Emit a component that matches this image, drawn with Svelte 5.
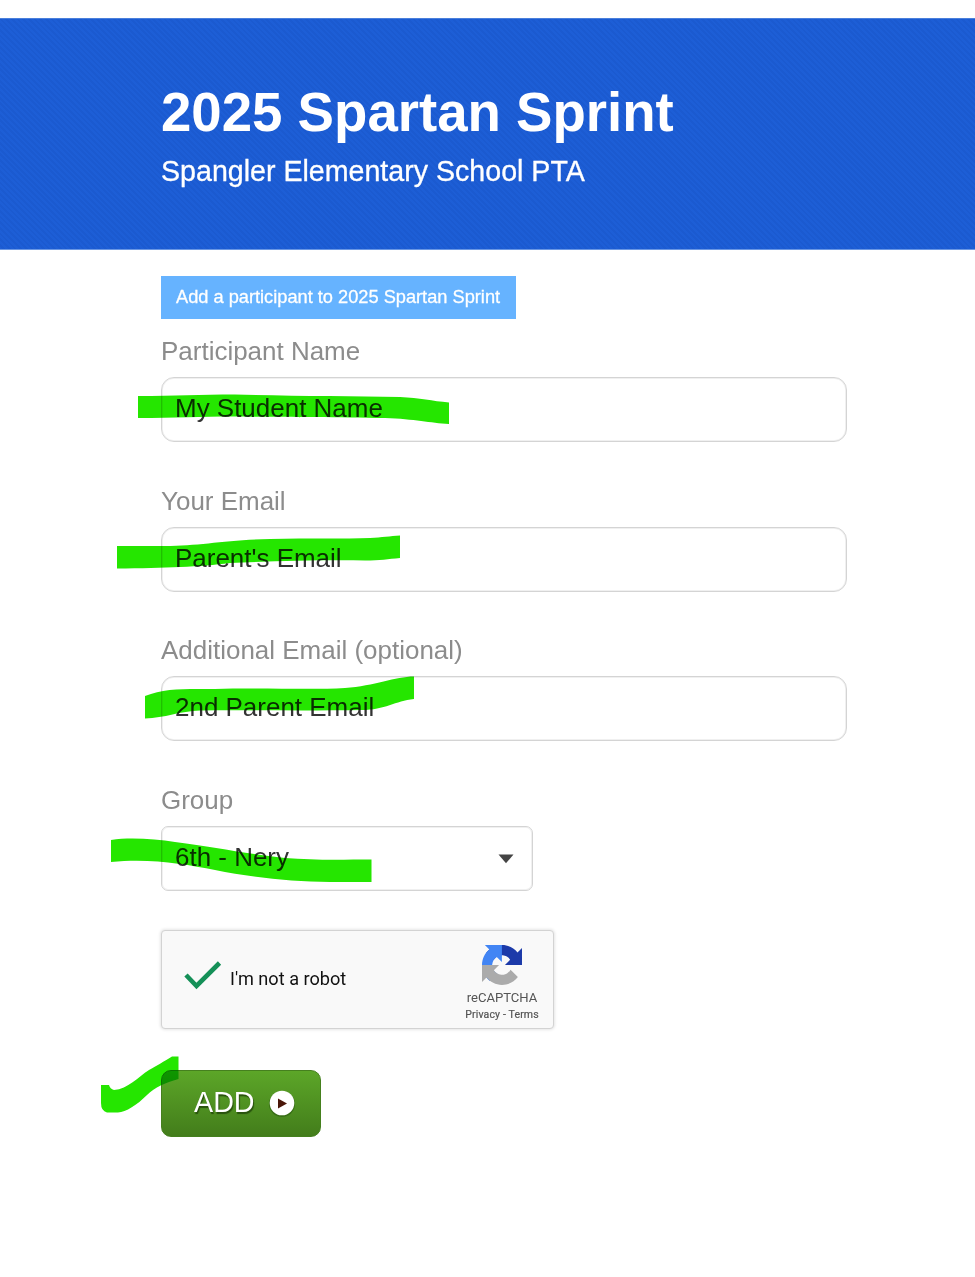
<script>
  let fields = $state([
    { id: "name", label: "Participant Name", value: "My Student Name" },
    { id: "email", label: "Your Email", value: "Parent's Email" },
    { id: "email2", label: "Additional Email (optional)", value: "2nd Parent Email" },
  ]);

  let group = $state("6th - Nery");

  // highlighter strokes, drawn over the form
  const strokes = [
    "M138 396 C175 396 200 394.500 235 394.500 C290 396 350 396 400 397 C420 398 432 401 449 402.500 V424 C430 423 415 419 385 418 C330 417 270 417 235 416.500 C200 416.500 175 418 138 418 Z",
    "M117 546 H165 C200 546 225 540 270 539 C310 538 345 539 370 538 C382 537.500 390 536 400 535.500 V558 C388 559 380 560.500 365 560.500 C320 560 270 561 230 563 C200 567 165 568 117 568.500 Z",
    "M145 696 C165 688 185 689 215 689 C260 687.500 310 690 345 688 C375 686 395 676.500 414 676.500 V699 C395 701 385 710 362 710 C310 711 250 710 200 710.500 C180 711 165 718 145 718.500 Z",
    "M111 840 C130 837 155 839 175 842 C215 847 240 853 285 858 C315 860.500 345 859.500 371.500 859.500 V882 H330 C290 882 250 877 215 870 C185 864 150 858 111 862 Z",
    "M101 1085 H109 Q110 1089 114 1090 C128 1089 138 1077 149 1070 C158 1065 163 1062 172 1056.500 H178.500 V1079 C165 1083 155 1087 147 1095 C137 1105 126 1112 118 1112.500 H107 Q101 1111 101 1103 Z",
  ];
</script>

<div class="page">
  <header>
    <h1>2025 Spartan Sprint</h1>
    <h2>Spangler Elementary School PTA</h2>
  </header>

  <main>
    <div class="badge">Add a participant to 2025 Spartan Sprint</div>

    {#each fields as field}
      <div class="field">
        <label for={field.id}>{field.label}</label>
        <input id={field.id} type="text" bind:value={field.value} />
      </div>
    {/each}

    <div class="field">
      <label for="group">Group</label>
      <button id="group" class="select" type="button">
        <span>{group}</span>
        <svg width="16" height="10" viewBox="0 0 16 10"><path d="M0.500 0.500H15.500L8 9.300Z" fill="#444" /></svg>
      </button>
    </div>

    <div class="captcha">
      <svg class="check" width="38" height="30" viewBox="0 0 38 30">
        <path d="M2 14L12.500 25L35.500 2" fill="none" stroke="#159058" stroke-width="4.600" />
      </svg>
      <span class="robot">I'm not a robot</span>
      <div class="brand">
        <svg width="40" height="40" viewBox="0 0 64 64">
          <path fill="#1c3aa9" d="M64 31.955l-.033-1.37V4.687l-7.16 7.16C50.948 4.674 42.033.093 32.05.093c-10.4 0-19.622 4.96-25.458 12.64l11.736 11.86a15.55 15.55 0 0 1 4.754-5.334c2.05-1.6 4.952-2.906 8.968-2.906.485 0 .86.057 1.135.163 4.976.393 9.288 3.14 11.828 7.124l-8.307 8.307L64 31.953" />
          <path fill="#4285f4" d="M31.862.094l-1.37.033H4.594l7.16 7.16C4.58 13.147 0 22.06 0 32.046c0 10.4 4.96 19.622 12.64 25.458L24.5 45.768a15.55 15.55 0 0 1-5.334-4.754c-1.6-2.05-2.906-4.952-2.906-8.968 0-.485.057-.86.163-1.135.393-4.976 3.14-9.288 7.124-11.828l8.307 8.307L31.86.095" />
          <path fill="#ababab" d="M.001 32.045l.033 1.37v25.898l7.16-7.16c5.86 7.173 14.774 11.754 24.76 11.754 10.4 0 19.622-4.96 25.458-12.64l-11.736-11.86a15.55 15.55 0 0 1-4.754 5.334c-2.05 1.6-4.952 2.906-8.968 2.906-.485 0-.86-.057-1.135-.163-4.976-.393-9.288-3.14-11.828-7.124l8.307-8.307c-10.522.04-22.4.066-27.8-.005" />
        </svg>
        <span class="brand-name">reCAPTCHA</span>
        <span class="terms">Privacy - Terms</span>
      </div>
    </div>

    <button class="add" type="button">
      <span>ADD</span>
      <svg width="30" height="30" viewBox="0 0 30 30">
        <circle cx="15" cy="16" r="13" fill="#2c5c10" opacity="0.6" />
        <circle cx="15" cy="15" r="12.300" fill="#fff" />
        <path d="M11 10.500L20 15.500L11 20.500Z" fill="#4a1608" />
      </svg>
    </button>
  </main>

  <svg class="marker" width="975" height="1277" viewBox="0 0 975 1277">
    {#each strokes as d}
      <path {d} />
    {/each}
  </svg>
</div>

<style>
  :global(body) {
    margin: 0;
    background: #fff;
  }

  .page {
    position: relative;
    box-sizing: border-box;
    width: 975px;
    height: 1277px;
    padding-top: 18px;
    overflow: hidden;
    background: #fff;
    font-family: "Liberation Sans", Arial, sans-serif;
  }

  header {
    box-sizing: border-box;
    height: 232px;
    padding: 63px 0 0 161px;
    border-top: 1px solid #4a7fdc;
    border-bottom: 1px solid #6a97e4;
    color: #fff;
    background: repeating-linear-gradient(45deg, #1d5ed6 0 2px, #1b5ad0 2px 4px);
  }

  h1 {
    margin: 0;
    font-size: 54.600px;
    line-height: 62px;
    white-space: nowrap;
  }

  h2 {
    margin: 10px 0 0;
    font-size: 28.600px;
    font-weight: 400;
    line-height: 34px;
    white-space: nowrap;
    -webkit-text-stroke: 0.3px #fff;
  }

  main {
    display: flex;
    flex-direction: column;
    align-items: flex-start;
    padding: 26px 128px 0 161px;
  }

  .badge {
    box-sizing: border-box;
    width: 355px;
    height: 43px;
    margin-bottom: 15px;
    padding-left: 15px;
    color: #fff;
    background: #66b3ff;
    font-size: 18.230px;
    line-height: 42px;
    white-space: nowrap;
    -webkit-text-stroke: 0.3px #fff;
  }

  .field {
    display: flex;
    flex-direction: column;
    width: 100%;
    height: 149.600px;
  }

  label {
    margin-bottom: 9px;
    color: #8c8c8c;
    font-size: 25.970px;
    line-height: 34px;
  }

  input,
  .select {
    box-sizing: border-box;
    width: 686px;
    height: 65px;
    padding: 0 13px 2px;
    border: 1px solid #d4d4d4;
    border-radius: 13px;
    box-shadow: inset 0 0 0 1px #f0f0f0;
    color: #333;
    background: #fff;
    font-family: inherit;
    font-size: 25.970px;
    outline: none;
  }

  .select {
    display: flex;
    align-items: center;
    justify-content: space-between;
    width: 372px;
    padding-right: 18px;
    border-radius: 7px;
    text-align: left;
  }

  .select svg {
    margin-top: 3px;
  }

  .captcha {
    box-sizing: border-box;
    display: flex;
    align-items: flex-start;
    width: 393px;
    height: 99px;
    margin: -2px 0 41px;
    padding-left: 22px;
    border: 1px solid #d3d3d3;
    border-radius: 4px;
    background: #f9f9f9;
    box-shadow: 0 0 3px 1px rgba(0, 0, 0, 0.1);
    font-family: Roboto, sans-serif;
  }

  .check {
    margin-top: 30px;
  }

  .robot {
    width: 233px;
    margin: 36px 0 0 8px;
    color: #111;
    font-size: 18.150px;
    line-height: 24px;
    white-space: nowrap;
  }

  .brand {
    display: flex;
    flex-direction: column;
    align-items: center;
    width: 78px;
    padding-top: 14px;
    color: #555;
    white-space: nowrap;
  }

  .brand-name {
    margin-top: 5px;
    font-size: 13.100px;
    line-height: 16px;
  }

  .terms {
    margin-top: 2px;
    font-size: 10.500px;
    line-height: 14px;
    letter-spacing: 0.15px;
    -webkit-text-stroke: 0.2px #555;
  }

  .add {
    box-sizing: border-box;
    display: flex;
    align-items: center;
    gap: 12px;
    width: 160px;
    height: 67px;
    padding: 0 0 2px 32px;
    border: 1.500px solid #45801e;
    border-radius: 10px;
    color: #fff;
    background: linear-gradient(#5ca628, #437d1b);
    font-family: inherit;
    font-size: 28.700px;
    text-shadow: 1px 2px 1px #28510d;
  }

  .marker {
    position: absolute;
    top: 0;
    left: 0;
    fill: #25e600;
    mix-blend-mode: multiply;
    pointer-events: none;
  }
</style>
